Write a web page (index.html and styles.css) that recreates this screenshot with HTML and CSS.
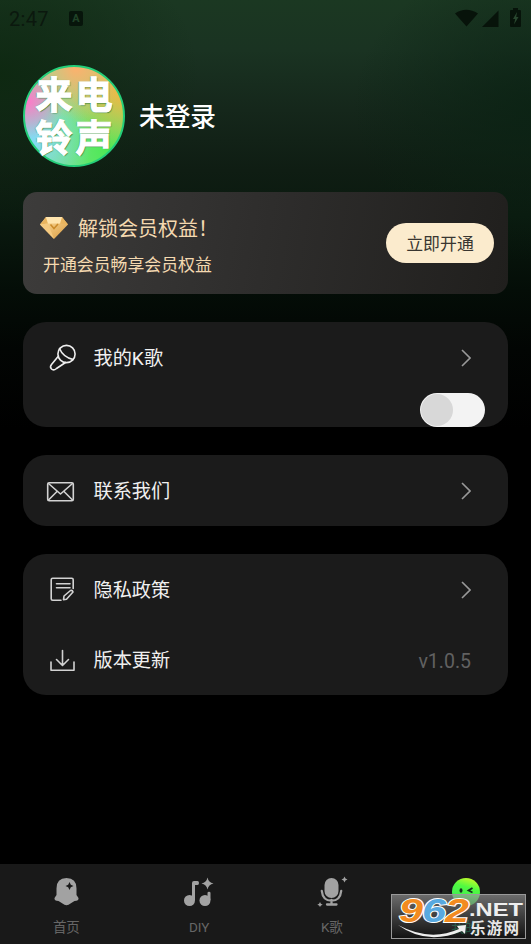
FILE: index.html
```html
<!DOCTYPE html>
<html lang="zh-CN">
<head>
<meta charset="utf-8">
<title>我的</title>
<link rel="stylesheet" href="styles.css">
</head>
<body>
<div class="screen">
  <header class="status">
    <span class="time">2:47</span>
    <span class="ime">A</span>
    <svg class="status-icons" width="68" height="22" viewBox="0 0 68 22">
      <path d="M1 5.500Q12-2 24 5.500L12.500 18.500ZM28 19 44.500 2.500V19Z"/>
      <path d="M59 0h5v2h2q1 0 1 1v15q0 1-1 1h-9q-1 0-1-1V3q0-1 1-1h2Z"/>
      <path class="bolt" d="m63 4-4 7h2.200L60 16.500l4.500-7.500h-2.300Z"/>
    </svg>
  </header>

  <section class="profile">
    <div class="avatar"><span>来电</span><span>铃声</span></div>
    <h1>未登录</h1>
  </section>

  <main>
    <section class="vip">
      <div class="vip-copy">
        <div class="vip-title">
          <svg width="28" height="24" viewBox="0 0 28 24">
            <defs><linearGradient id="gold" x2="1" y2="1"><stop stop-color="#ffe2a5"/><stop offset="1" stop-color="#d99a3e"/></linearGradient></defs>
            <path d="M6 1h16l6 7.500L14 23 0 8.500Z" fill="url(#gold)"/>
            <path d="M6 1 8 7.500 0 8.500ZM22 1l-2 6.500 8 1Z" fill="#e9b45e"/>
            <path d="M6 1h16l-2 6.500H8Z" fill="#ffe5ae"/>
            <path d="M8 7.500 14 23 0 8.500Z" fill="#f5ca80"/>
            <path d="m10.500 8.500 3.500 4 4-4.500" fill="none" stroke="#cb8b2b" stroke-width="1.500"/>
          </svg>
          <span>解锁会员权益！</span>
        </div>
        <p>开通会员畅享会员权益</p>
      </div>
      <button>立即开通</button>
    </section>

    <section class="card">
      <div class="row">
        <svg class="icon" viewBox="0 0 32 32">
          <circle cx="20.500" cy="12" r="8.600"/>
          <path d="M13.500 6.500Q17 15 27 17.500M12.500 14 5.500 22.500Q3.500 25 5.500 27t5-.5L19.500 20.500"/>
        </svg>
        <span class="label">我的K歌</span>
        <svg class="chevron" viewBox="0 0 10 18"><path d="m1 1 8 8-8 8"/></svg>
      </div>
      <div class="toggle-row"><span class="toggle"></span></div>
    </section>

    <section class="card">
      <div class="row">
        <svg class="icon" viewBox="0 0 32 32">
          <g class="muted"><rect x="1.700" y="7.700" width="25.600" height="18" rx="1.500"/>
          <path d="m2.500 8.500 12 10.500L26.500 8.500M2.500 25 11 16.500M26.500 25 18 16.500"/></g>
        </svg>
        <span class="label">联系我们</span>
        <svg class="chevron" viewBox="0 0 10 18"><path d="m1 1 8 8-8 8"/></svg>
      </div>
    </section>

    <section class="card">
      <div class="row">
        <svg class="icon" viewBox="0 0 32 32">
          <g class="muted"><path d="M15 26.300H6.700q-1.500 0-1.500-1.500V5.800q0-1.500 1.500-1.500h19q1.500 0 1.500 1.500V14.500M10.500 9.700h13.500M10.500 13.700h13.500"/>
          <path d="m17.500 25.700.5-3.700 6.500-5.500q2-.5 2.500 1.500L20.500 25.200Z"/></g>
        </svg>
        <span class="label">隐私政策</span>
        <svg class="chevron" viewBox="0 0 10 18"><path d="m1 1 8 8-8 8"/></svg>
      </div>
      <div class="row last">
        <svg class="icon" viewBox="0 0 32 32">
          <g class="muted"><path d="M16.500 6.500v14.500M10.500 15.500l6 6 6-6M5 18v8.200h23V18"/></g>
        </svg>
        <span class="label">版本更新</span>
        <span class="version">v1.0.5</span>
      </div>
    </section>
  </main>

  <nav class="tabs">
    <div class="tab">
      <svg viewBox="0 0 32 32">
        <path d="M6.500 13.500Q6.500 3 16.500 3t10 10.500V20l2 3q.5 3-4 3l-4 2.500q-4 3.500-8 0L8.500 26q-4.500 0-4-3l2-3Z"/>
        <path class="cut" d="m19.500 7 1.300 2.700L23.500 11l-2.700 1.300-1.300 2.700-1.300-2.700L15.500 11l2.700-1.300Z"/>
      </svg>
      <span>首页</span>
    </div>
    <div class="tab">
      <svg viewBox="0 0 32 32">
        <circle cx="6.500" cy="25.500" r="5.500"/><circle cx="22" cy="25.500" r="5.500"/>
        <path d="M9 25V8q0-2 2-2h3.500q1.500 0 1.500 2t-1.500 2H12v15ZM24.500 25v-7q0-1.300 1.500-1.300t1.500 1.300v7ZM24.500 2.500q1 5 6 6-5 1-6 6-1-5-6-6 5-1 6-6Z"/>
      </svg>
      <span>DIY</span>
    </div>
    <div class="tab">
      <svg viewBox="0 0 32 32">
        <rect x="8.500" y="3" width="14" height="20" rx="7"/>
        <path class="stand" d="M5.800 16q1 9.700 9.700 9.700t9.700-9.700M15.500 25v4.500M11 29.500h9.500"/>
        <path d="m28.500 1.500 1 2 2 1-2 1-1 2-1-2-2-1 2-1ZM4 27l.9 1.800 1.800.9-1.800.9L4 32l-.9-1.400-1.800-.9 1.800-.9Z"/>
      </svg>
      <span>K歌</span>
    </div>
    <div class="tab active">
      <svg viewBox="0 0 32 32">
        <defs><linearGradient id="face" x1=".7" y1="0" x2=".4" y2="1"><stop stop-color="#c8fa28"/><stop offset=".35" stop-color="#50fa41"/><stop offset="1" stop-color="#39e85d"/></linearGradient></defs>
        <circle cx="17" cy="17" r="14" fill="url(#face)"/>
        <ellipse cx="12" cy="15.500" rx="1.500" ry="2.200" fill="#14351c"/>
        <path class="wink" d="m23.500 13-4 2.500 4 2"/>
      </svg>
      <span>我的</span>
    </div>
  </nav>

  <aside class="watermark">
    <svg width="135" height="45" viewBox="0 0 135 45">
      <g class="digits"><text x="8" y="28" textLength="24" lengthAdjust="spacingAndGlyphs">9</text><text class="blue" x="31" y="28" textLength="24" lengthAdjust="spacingAndGlyphs">6</text><text x="54" y="28" textLength="24" lengthAdjust="spacingAndGlyphs">2</text></g>
      <text class="net" x="78" y="22" textLength="54" lengthAdjust="spacingAndGlyphs">.NET</text>
      <path d="M7 31Q39 48 68 35L66 32 75 31 74 40 71 37Q36 52 7 31Z" fill="#eee"/>
      <text class="site" x="79" y="40" textLength="49">乐游网</text>
    </svg>
  </aside>
</div>
</body>
</html>
```
FILE: styles.css
```css
* { box-sizing: border-box; }

body {
  margin: 0;
  background: #000;
  color: #f0f0f0;
  font-family: Roboto, "Noto Sans CJK SC", sans-serif;
}

.screen {
  position: relative;
  display: flex;
  flex-direction: column;
  width: 531px;
  height: 944px;
  overflow: hidden;
  background:
    radial-gradient(ellipse 200px 150px at 0 75px, rgba(13, 40, 16, .9), transparent),
    radial-gradient(ellipse 180px 150px at 531px 110px, rgba(10, 34, 19, .8), transparent),
    linear-gradient(#1b3822 0, #1a3322 50px, #15271b 110px, #0f1d13 170px, #0a1a0f 215px, #040d07 290px, #020503 350px, #000 430px);
}

.status {
  display: flex;
  align-items: center;
  height: 37px;
  padding: 0 9px;
  color: #0b180e;
}

.time { width: 60px; font-size: 20px; letter-spacing: .3px; }

.ime {
  width: 14px;
  height: 15px;
  border-radius: 2px;
  background: #07150b;
  color: #204328;
  font-size: 11px;
  font-weight: 700;
  line-height: 15px;
  text-align: center;
}

.status-icons { margin-left: auto; fill: #07130a; }
.bolt { fill: #29472f; }

.profile {
  display: flex;
  align-items: center;
  gap: 14px;
  height: 102px;
  margin: 28px 23px 25px;
}

.avatar {
  display: flex;
  flex-direction: column;
  align-items: center;
  justify-content: center;
  width: 102px;
  height: 102px;
  padding-top: 3px;
  border: 2px solid #24ce79;
  border-radius: 50%;
  background:
    radial-gradient(circle at 3% 35%, #ff79c9, transparent 32%),
    radial-gradient(circle at 52% 0, #ffb06c, transparent 48%),
    radial-gradient(circle at 100% 25%, #f5b73e, transparent 48%),
    radial-gradient(circle at 10% 75%, #85d9f7, transparent 50%),
    radial-gradient(circle at 88% 85%, #4be953, transparent 70%),
    #8be199;
  color: #fff;
  font-size: 37px;
  font-weight: 700;
  line-height: 43px;
  letter-spacing: 3px;
  text-indent: 3px;
  -webkit-text-stroke: 1.2px #fff;
  text-shadow: 1px 1px 1px #35803e, -1px 0 1px #4b9e54;
}

h1 { margin: -4px 0 0; font-size: 25.7px; font-weight: 500; color: #fff; }

main { display: flex; flex-direction: column; gap: 28px; padding: 0 23px; }

.vip {
  display: flex;
  align-items: center;
  justify-content: space-between;
  height: 102px;
  padding: 0 14px 0 17px;
  border-radius: 14px;
  background: linear-gradient(100deg, #3d3c3b, #2e2d2c 50%, #201f1d);
  color: #f4d9b0;
}

.vip-copy { padding-top: 6px; }
.vip-title { display: flex; align-items: center; gap: 10px; height: 34px; font-size: 20px; }
.vip p { margin: 3px 0 0 3px; font-size: 16.9px; line-height: 34px; }

button {
  width: 108px;
  height: 40px;
  padding: 0 0 1px;
  border: 0;
  border-radius: 20px;
  background: #fbebcd;
  color: #393631;
  font: 16.9px Roboto, "Noto Sans CJK SC", sans-serif;
}

.card { border-radius: 23px; background: #1b1b1b; }
.row { display: flex; align-items: center; height: 71px; padding: 0 37px 0 23px; }
.last { height: 70px; }

.icon {
  width: 32px;
  height: 32px;
  fill: none;
  stroke: #eee;
  stroke-width: 1.6;
  stroke-linecap: round;
  stroke-linejoin: round;
}

.muted { stroke: #d2d2d2; }
.label { margin: -2px 0 0 15.500px; font-size: 19.2px; }

.chevron {
  width: 10px;
  height: 18px;
  margin-left: auto;
  fill: none;
  stroke: #999;
  stroke-width: 1.6;
}

.version { margin: 2px 0 0 auto; color: #616161; font-size: 19.5px; }

.toggle-row { display: flex; justify-content: flex-end; height: 34px; padding-right: 23px; }
.toggle { display: block; width: 65px; height: 34px; padding: 1px; border-radius: 17px; background: #f3f3f3; }
.toggle::before { content: ""; display: block; width: 32px; height: 32px; border-radius: 50%; background: #d8d8d8; }

.tabs {
  display: grid;
  grid-template-columns: repeat(4, 1fr);
  height: 80px;
  margin-top: auto;
  background: #191919;
}

.tab { display: flex; flex-direction: column; align-items: center; padding-top: 11px; color: #666; font-size: 13.5px; }
.tab svg { width: 32px; height: 32px; fill: #a2a2a2; }
.tab span { height: 20px; margin-top: 10px; line-height: 20px; }
.tab .cut { fill: #191919; }
.tab .stand { fill: none; stroke: #a2a2a2; stroke-width: 2.3; stroke-linecap: round; }
.tab .wink { fill: none; stroke: #14351c; stroke-width: 1.8; }
.active { color: #16a66d; }

.watermark {
  position: absolute;
  left: 391px;
  top: 894px;
  width: 135px;
  height: 45px;
  background: linear-gradient(rgba(155, 155, 155, .65), rgba(80, 80, 80, .65) 50%, rgba(12, 12, 12, .65));
  box-shadow: inset 0 0 0 1px #999;
}

.watermark svg { display: block; overflow: visible; }

.digits {
  font: italic 700 34px "Liberation Sans", sans-serif;
  fill: #f28b20;
  stroke: #fff;
  stroke-width: 2px;
  paint-order: stroke;
}

.digits .blue { fill: #58a9df; }
.net { font: 700 18px "Liberation Sans", sans-serif; fill: #eee; }
.site { font: 700 15.5px "Noto Sans CJK SC", sans-serif; fill: #e8e8e8; }
```
